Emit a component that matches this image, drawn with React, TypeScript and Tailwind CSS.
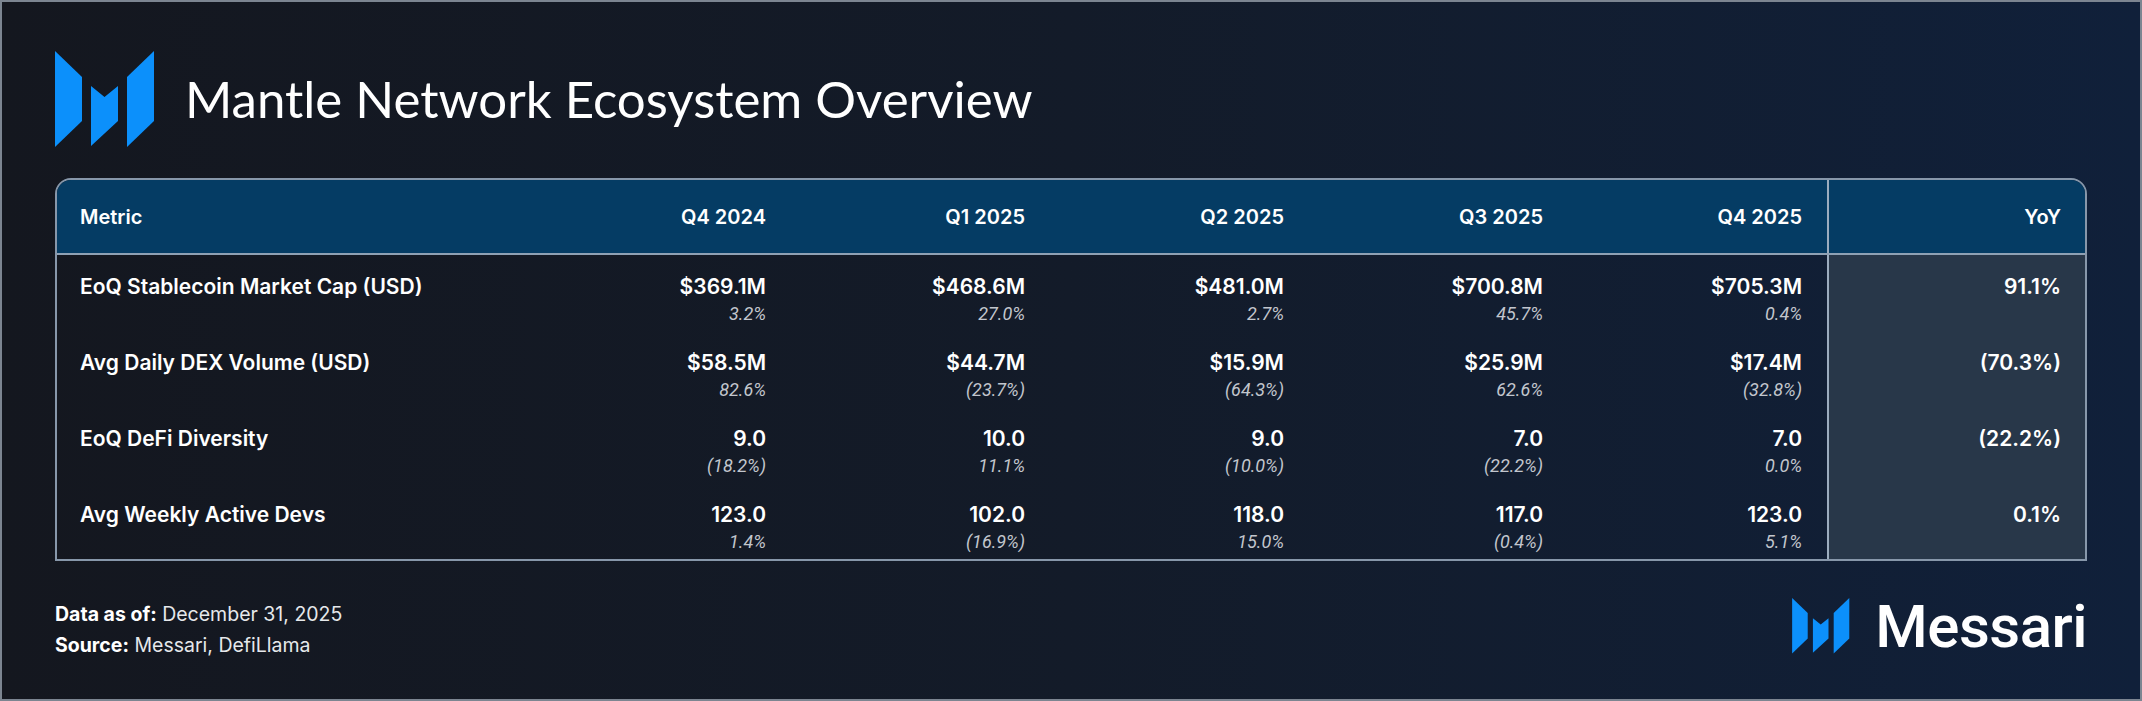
const quarters = ["Q4 2024", "Q1 2025", "Q2 2025", "Q3 2025", "Q4 2025"];

const rows = [
  {
    metric: "EoQ Stablecoin Market Cap (USD)",
    values: [
      ["$369.1M", "3.2%"],
      ["$468.6M", "27.0%"],
      ["$481.0M", "2.7%"],
      ["$700.8M", "45.7%"],
      ["$705.3M", "0.4%"],
    ],
    yoy: "91.1%",
  },
  {
    metric: "Avg Daily DEX Volume (USD)",
    values: [
      ["$58.5M", "82.6%"],
      ["$44.7M", "(23.7%)"],
      ["$15.9M", "(64.3%)"],
      ["$25.9M", "62.6%"],
      ["$17.4M", "(32.8%)"],
    ],
    yoy: "(70.3%)",
  },
  {
    metric: "EoQ DeFi Diversity",
    values: [
      ["9.0", "(18.2%)"],
      ["10.0", "11.1%"],
      ["9.0", "(10.0%)"],
      ["7.0", "(22.2%)"],
      ["7.0", "0.0%"],
    ],
    yoy: "(22.2%)",
  },
  {
    metric: "Avg Weekly Active Devs",
    values: [
      ["123.0", "1.4%"],
      ["102.0", "(16.9%)"],
      ["118.0", "15.0%"],
      ["117.0", "(0.4%)"],
      ["123.0", "5.1%"],
    ],
    yoy: "0.1%",
  },
];

const MessariMark = ({ className }: { className?: string }) => (
  <svg viewBox="0 0 100 97" className={className} fill="#0c90fb">
    <path d="M0 0 L27 26 L27 70 L0 96 Z" />
    <path d="M36 35 L49.5 46 L63 35 L63 70 L36 95 Z" />
    <path d="M72 26 L99 0 L99 70 L72 96 Z" />
  </svg>
);

export default function App() {
  return (
    <div className="w-[2142px] h-[701px] border-2 border-[#7c8591] bg-gradient-to-r from-[#14171f] via-[#131b29] to-[#10203a] px-[53px] pt-[49px] font-['Inter',sans-serif] text-white">
      {/* Title */}
      <div className="flex items-center gap-[30px]">
        <MessariMark className="w-[100px] h-[97px]" />
        <h1 className="-mt-[3px] font-['Lato',sans-serif] text-[51px] leading-none font-normal text-white">
          Mantle Network Ecosystem Overview
        </h1>
      </div>

      {/* Table */}
      <div className="mt-[30px] border-2 border-[#8797aa] rounded-t-[16px] overflow-hidden">
        <div className="grid grid-cols-[475px_repeat(5,259px)_1fr] bg-[#053c64] h-[75px] border-b-2 border-[#8fa1b4] text-[20px] font-semibold">
          <div className="flex items-center pl-[23px]">Metric</div>
          {quarters.map((q) => (
            <div key={q} className="flex items-center justify-end pr-[25px]">
              {q}
            </div>
          ))}
          <div className="flex items-center justify-end pr-[24px] border-l-2 border-[#9cadbf]">YoY</div>
        </div>

        {rows.map((row) => (
          <div key={row.metric} className="grid grid-cols-[475px_repeat(5,259px)_1fr] h-[76px]">
            <div className="pl-[23px] pt-[19px] text-[21px] leading-[25px] font-semibold">{row.metric}</div>
            {row.values.map(([v, p], i) => (
              <div key={i} className="flex flex-col items-end pr-[25px] pt-[19px]">
                <span className="text-[21px] leading-[25px] font-semibold">{v}</span>
                <span className="mt-[5px] text-[18px] leading-[20px] italic font-normal text-[#c2c6cd] font-['Roboto',sans-serif]">
                  {p}
                </span>
              </div>
            ))}
            <div className="flex justify-end pr-[24px] pt-[19px] bg-[#283749] border-l-2 border-[#9cadbf] text-[21px] leading-[25px] font-semibold">
              {row.yoy}
            </div>
          </div>
        ))}
      </div>

      {/* Footer */}
      <div className="mt-[38px] flex justify-between items-start">
        <div className="text-[19.5px] leading-[31px] text-[#e6e8eb]">
          <div>
            <span className="font-bold text-white">Data as of:</span> December 31, 2025
          </div>
          <div>
            <span className="font-bold text-white">Source:</span> Messari, DefiLlama
          </div>
        </div>
        <div className="flex items-center gap-[25px] mt-[-1px]">
          <MessariMark className="w-[58px] h-[56px]" />
          <span className="font-['Roboto',sans-serif] text-[60px] leading-[55px] font-medium tracking-[-0.5px] text-white">
            Messari
          </span>
        </div>
      </div>
    </div>
  );
}
